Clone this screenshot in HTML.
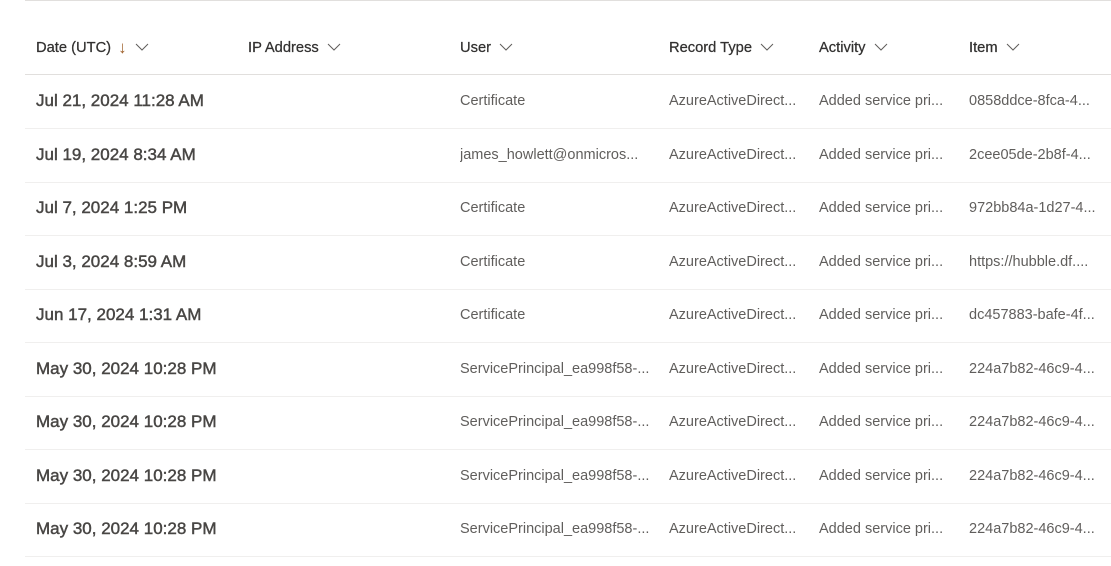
<!DOCTYPE html>
<html><head><meta charset="utf-8"><style>
html,body{margin:0;padding:0;background:#fff;width:1111px;height:566px;overflow:hidden;font-family:"Liberation Sans",sans-serif}
.top{position:absolute;left:25px;right:0;top:0;height:1px;background:#e1dfdd}
.hl{position:absolute;left:25px;right:0;height:1px;background:#e1dfdd}
.rl{position:absolute;left:25px;right:0;height:1px;background:#f0efee}
.h{position:absolute;top:38px;height:20px;line-height:20px;font-size:14.7px;color:#323130;white-space:nowrap;-webkit-text-stroke:0.25px #323130}
.h svg{vertical-align:middle;margin-left:8px;margin-top:-3px}
.ar{color:#a0622d;margin-left:7px;font-size:17px;-webkit-text-stroke:0;line-height:20px;vertical-align:top}
.c{position:absolute;font-size:14.5px;color:#605e5c;white-space:nowrap;overflow:hidden}
.d{position:absolute;font-size:17px;color:#484644;white-space:nowrap;-webkit-text-stroke:0.45px #484644}
</style></head><body>
<div class="top"></div>
<div class="h" style="left:36px">Date (UTC)<span class="ar">&#8595;</span><svg width="14" height="8" viewBox="0 0 14 8"><path d="M1 1L7 7L13 1" fill="none" stroke="#605e5c" stroke-width="1"/></svg></div>
<div class="h" style="left:248px">IP Address<svg width="14" height="8" viewBox="0 0 14 8"><path d="M1 1L7 7L13 1" fill="none" stroke="#605e5c" stroke-width="1"/></svg></div>
<div class="h" style="left:460px">User<svg width="14" height="8" viewBox="0 0 14 8"><path d="M1 1L7 7L13 1" fill="none" stroke="#605e5c" stroke-width="1"/></svg></div>
<div class="h" style="left:669px">Record Type<svg width="14" height="8" viewBox="0 0 14 8"><path d="M1 1L7 7L13 1" fill="none" stroke="#605e5c" stroke-width="1"/></svg></div>
<div class="h" style="left:819px">Activity<svg width="14" height="8" viewBox="0 0 14 8"><path d="M1 1L7 7L13 1" fill="none" stroke="#605e5c" stroke-width="1"/></svg></div>
<div class="h" style="left:969px">Item<svg width="14" height="8" viewBox="0 0 14 8"><path d="M1 1L7 7L13 1" fill="none" stroke="#605e5c" stroke-width="1"/></svg></div>
<div class="hl" style="top:74px"></div>
<div id="rows"></div>
<script>
var R=[["Jul 21, 2024 11:28 AM","Certificate","0858ddce-8fca-4..."],
["Jul 19, 2024 8:34 AM","james_howlett@onmicros...","2cee05de-2b8f-4..."],
["Jul 7, 2024 1:25 PM","Certificate","972bb84a-1d27-4..."],
["Jul 3, 2024 8:59 AM","Certificate","https://hubble.df...."],
["Jun 17, 2024 1:31 AM","Certificate","dc457883-bafe-4f..."],
["May 30, 2024 10:28 PM","ServicePrincipal_ea998f58-...","224a7b82-46c9-4..."],
["May 30, 2024 10:28 PM","ServicePrincipal_ea998f58-...","224a7b82-46c9-4..."],
["May 30, 2024 10:28 PM","ServicePrincipal_ea998f58-...","224a7b82-46c9-4..."],
["May 30, 2024 10:28 PM","ServicePrincipal_ea998f58-...","224a7b82-46c9-4..."]];
var h="";
R.forEach(function(r,i){var t=75+i*53.5;var c=t+26;
h+='<div class="d" style="left:36px;top:'+(c-10)+'px">'+r[0]+'</div>';
h+='<div class="c" style="left:460px;width:195px;top:'+(c-8)+'px">'+r[1]+'</div>';
h+='<div class="c" style="left:669px;width:140px;top:'+(c-8)+'px">AzureActiveDirect...</div>';
h+='<div class="c" style="left:819px;width:140px;top:'+(c-8)+'px">Added service pri...</div>';
h+='<div class="c" style="left:969px;width:142px;top:'+(c-8)+'px">'+r[2]+'</div>';
h+='<div class="rl" style="top:'+Math.round(t+53)+'px"></div>';});
document.getElementById("rows").innerHTML=h;
</script>
</body></html>
